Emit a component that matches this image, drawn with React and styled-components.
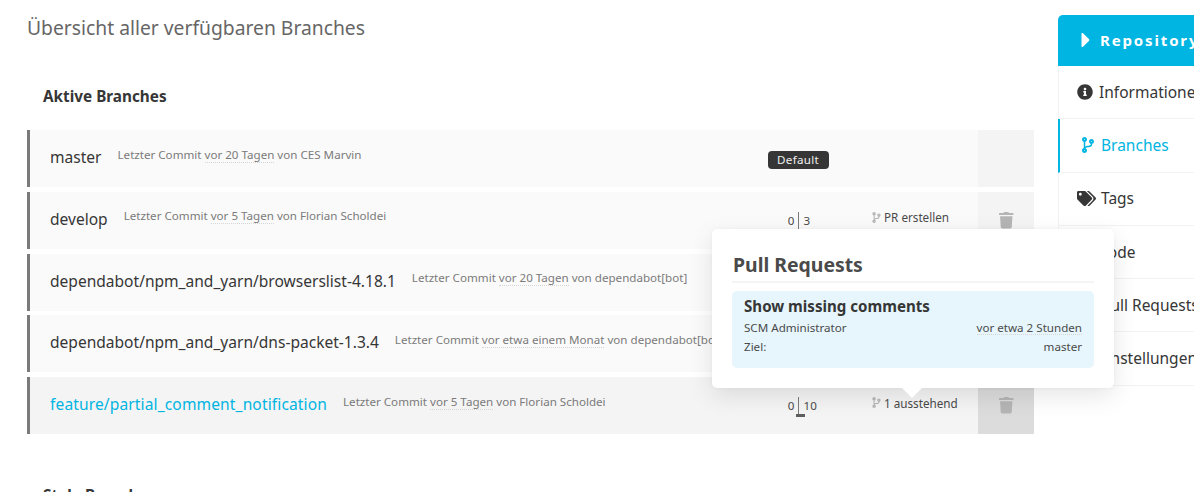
import React from 'react';
import styled, { createGlobalStyle } from 'styled-components';
import { FaCaretRight, FaCodeBranch, FaInfoCircle, FaTags, FaTrash, FaCode, FaCog } from 'react-icons/fa';

const GlobalStyle = createGlobalStyle`
  html, body {
    margin: 0;
    height: 100%;
    overflow: hidden;
    background: #fff;
    font-family: "Noto Sans", "Liberation Sans", sans-serif;
    color: #363636;
  }
`;

const Page = styled.div`
  position: relative;
  display: flex;
  width: 1194px;
  height: 492px;
  overflow: hidden;
  box-sizing: border-box;
  padding-left: 27px;
`;

// left column with the branch table
const Main = styled.main`
  flex: 0 0 1007px;
  display: flex;
  flex-direction: column;
`;

const Title = styled.h1`
  margin: 16px 0 0;
  height: 24px;
  line-height: 24px;
  font-size: 19.3px;
  font-weight: 400;
  color: #666;
`;

const SectionTitle = styled.h2`
  margin: ${props => props.$top}px 0 0 16px;
  height: 20px;
  line-height: 20px;
  font-size: 15.3px;
  font-weight: 700;
  color: #363636;
`;

const Rows = styled.div`
  margin-top: 24px;
  display: flex;
  flex-direction: column;
  gap: 4.75px;
`;

const Row = styled.div`
  display: flex;
  height: 57px;
  box-sizing: border-box;
  border-left: 3px solid #7a7a7a;
  background: ${props => (props.$hover ? '#f4f4f4' : '#fafafa')};
`;

const Info = styled.div`
  flex: 1;
  min-width: 0;
  display: flex;
  align-items: center;
  gap: 16px;
  padding: 0 0 3px 20px;
  white-space: nowrap;
  overflow: hidden;
`;

const BranchName = styled.a`
  font-size: 15.55px;
  letter-spacing: ${props => (props.$hover ? '0.13px' : '0')};
  color: ${props => (props.$hover ? '#00b5e2' : '#363636')};
`;

const CommitLine = styled.span`
  position: relative;
  top: -3px;
  font-size: 11.6px;
  color: #7a7a7a;
`;

const Ago = styled.span`
  border-bottom: 1px dotted #d5d5d5;
`;

const DiffCell = styled.div`
  flex: 0 0 100px;
  display: flex;
  align-items: center;
  justify-content: center;
`;

const DefaultTag = styled.span`
  height: 18px;
  width: 61px;
  border-radius: 4px;
  background: #363636;
  color: #f0f0f0;
  font-size: 11.6px;
  letter-spacing: 0.3px;
  line-height: 18px;
  text-align: center;
  position: relative;
  top: 1px;
`;

const Diff = styled.div`
  position: relative;
  display: grid;
  grid-template-columns: 1fr auto 1fr;
  width: 60px;
  align-items: center;
  font-size: 11.6px;
  color: #4a4a4a;
`;

const Ahead = styled.span`
  text-align: right;
  padding-right: 3px;
`;

const Behind = styled.span`
  padding-left: 5px;
`;

const DiffLine = styled.span`
  width: 1px;
  height: 17px;
  background: #7a7a7a;
`;

const DiffBar = styled.span`
  position: absolute;
  left: 28px;
  bottom: -3px;
  height: 3px;
  width: 9px;
  background: #5f5f5f;
`;

const PrCell = styled.div`
  flex: 0 0 130px;
  box-sizing: border-box;
  padding: 0 0 6px 23px;
  display: flex;
  align-items: center;
  gap: 2px;
  font-size: 11.7px;
  color: #4a4a4a;
  white-space: nowrap;

  svg {
    color: #b5b5b5;
    font-size: 11px;
  }
`;

const ActionCell = styled.div`
  flex: 0 0 56px;
  display: flex;
  align-items: center;
  justify-content: center;
  background: ${props => (props.$hover ? '#dcdcdc' : '#f4f4f4')};
  color: #b5b5b5;
  font-size: 16.5px;
`;

const Sidebar = styled.aside`
  flex: 0 0 200px;
  margin: 15px 0 0 24px;
  align-self: flex-start;
`;

const SideHeader = styled.div`
  display: flex;
  align-items: center;
  height: 51px;
  box-sizing: border-box;
  padding: 0 0 2px 16px;
  border-radius: 5px 0 0 0;
  background: #00b5e2;
  color: #fff;
  font-size: 15px;
  font-weight: 700;
  letter-spacing: 1.85px;
  white-space: nowrap;

  svg {
    font-size: 24px;
    margin-right: 2px;
  }
`;

const SideItem = styled.div`
  display: flex;
  align-items: center;
  height: 53.3px;
  box-sizing: border-box;
  gap: ${props => props.$gap}px;
  padding: 0 0 1px ${props => (props.$active ? 20 : 18)}px;
  border-left: ${props => (props.$active ? '2px solid #00b5e2' : '1px solid #f2f2f2')};
  border-bottom: 1px solid #f2f2f2;
  color: ${props => (props.$active ? '#00b5e2' : '#363636')};
  font-size: 15.5px;
  white-space: nowrap;

  svg {
    flex: none;
    font-size: ${props => props.$icon || 16}px;
  }
`;

const Popover = styled.div`
  position: absolute;
  left: 712px;
  top: 229px;
  width: 402px;
  height: 159px;
  box-sizing: border-box;
  padding: 20px 20px 0;
  border-radius: 5px;
  background: #fff;
  box-shadow: 0 8px 24px rgba(10, 10, 10, 0.1), 0 0 4px rgba(10, 10, 10, 0.04);

  &::after {
    content: '';
    position: absolute;
    left: 190px;
    bottom: -10px;
    border-left: 10px solid transparent;
    border-right: 10px solid transparent;
    border-top: 10px solid #fff;
  }
`;

const PopTitle = styled.h3`
  margin: 0;
  height: 32px;
  padding-left: 1px;
  line-height: 31px;
  font-size: 19.4px;
  font-weight: 700;
  color: #4a4a4a;
  border-bottom: 2px solid #f4f4f4;
`;

const PrCard = styled.div`
  margin-top: 8px;
  height: 77px;
  box-sizing: border-box;
  padding: 5px 12px 0;
  border-radius: 5px;
  background: #e6f6fc;
`;

const PrTitle = styled.div`
  font-size: 15.1px;
  line-height: 20px;
  font-weight: 700;
  color: #363636;
`;

const PrMeta = styled.div`
  display: flex;
  justify-content: space-between;
  margin-top: ${props => props.$top}px;
  height: 15px;
  line-height: 15px;
  font-size: 11.6px;
  color: #4a4a4a;
`;

const branches = [
  { name: 'master', who: 'vor 20 Tagen', author: 'CES Marvin', isDefault: true },
  { name: 'develop', who: 'vor 5 Tagen', author: 'Florian Scholdei', behind: 3, pr: 'PR erstellen' },
  { name: 'dependabot/npm_and_yarn/browserslist-4.18.1', who: 'vor 20 Tagen', author: 'dependabot[bot]' },
  { name: 'dependabot/npm_and_yarn/dns-packet-1.3.4', who: 'vor etwa einem Monat', author: 'dependabot[bot]' },
  { name: 'feature/partial_comment_notification', who: 'vor 5 Tagen', author: 'Florian Scholdei', behind: 10, pr: '1 ausstehend', hover: true },
];

function BranchRow({ branch }) {
  return (
    <Row $hover={branch.hover}>
      <Info>
        <BranchName $hover={branch.hover}>{branch.name}</BranchName>
        <CommitLine>
          Letzter Commit <Ago>{branch.who}</Ago> von {branch.author}
        </CommitLine>
      </Info>
      <DiffCell>
        {branch.isDefault && <DefaultTag>Default</DefaultTag>}
        {branch.behind && (
          <Diff>
            <Ahead>0</Ahead>
            <DiffLine />
            <Behind>{branch.behind}</Behind>
            {branch.hover && <DiffBar />}
          </Diff>
        )}
      </DiffCell>
      <PrCell>
        {branch.pr && <FaCodeBranch />}
        {branch.pr}
      </PrCell>
      <ActionCell $hover={branch.hover}>{!branch.isDefault && <FaTrash />}</ActionCell>
    </Row>
  );
}

export default function App() {
  return (
    <Page>
      <GlobalStyle />
      <Main>
        <Title>Übersicht aller verfügbaren Branches</Title>
        <SectionTitle $top={46}>Aktive Branches</SectionTitle>
        <Rows>
          {branches.map(branch => (
            <BranchRow key={branch.name} branch={branch} />
          ))}
        </Rows>
        <SectionTitle $top={51}>Stale Branches</SectionTitle>
      </Main>
      <Sidebar>
        <SideHeader>
          <FaCaretRight />
          Repository
        </SideHeader>
        <SideItem $gap={6}>
          <FaInfoCircle />
          Informationen
        </SideItem>
        <SideItem $active $gap={5}>
          <FaCodeBranch />
          Branches
        </SideItem>
        <SideItem $gap={5} $icon={19}>
          <FaTags />
          Tags
        </SideItem>
        <SideItem $gap={5}>
          <FaCode />
          Code
        </SideItem>
        <SideItem $gap={8}>
          <FaCodeBranch />
          Pull Requests
        </SideItem>
        <SideItem $gap={5}>
          <FaCog />
          Einstellungen
        </SideItem>
      </Sidebar>
      <Popover>
        <PopTitle>Pull Requests</PopTitle>
        <PrCard>
          <PrTitle>Show missing comments</PrTitle>
          <PrMeta $top={4}>
            <span>SCM Administrator</span>
            <Ago>vor etwa 2 Stunden</Ago>
          </PrMeta>
          <PrMeta $top={4}>
            <span>Ziel:</span>
            <span>master</span>
          </PrMeta>
        </PrCard>
      </Popover>
    </Page>
  );
}
